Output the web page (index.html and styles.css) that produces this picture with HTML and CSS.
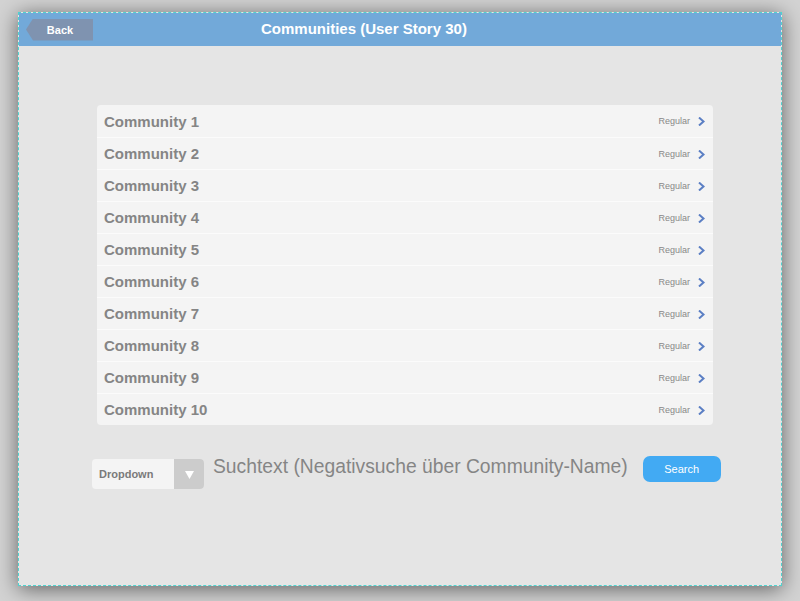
FILE: index.html
```html
<!DOCTYPE html>
<html>
<head>
<meta charset="utf-8">
<link rel="stylesheet" href="styles.css">
</head>
<body>
<div class="frame">
  <div class="header">
    <div class="back">Back</div>
    <div class="title">Communities (User Story 30)</div>
  </div>
  <div class="content">
    <ul class="list">
      <li class="row"><span class="name">Community 1</span><span class="tag">Regular</span><svg class="chev" viewBox="0 0 7 9" width="7" height="9"><path d="M1 0.5 L5.5 4.5 L1 8.5" fill="none" stroke="#5b7fc4" stroke-width="2"/></svg></li>
      <li class="row"><span class="name">Community 2</span><span class="tag">Regular</span><svg class="chev" viewBox="0 0 7 9" width="7" height="9"><path d="M1 0.5 L5.5 4.5 L1 8.5" fill="none" stroke="#5b7fc4" stroke-width="2"/></svg></li>
      <li class="row"><span class="name">Community 3</span><span class="tag">Regular</span><svg class="chev" viewBox="0 0 7 9" width="7" height="9"><path d="M1 0.5 L5.5 4.5 L1 8.5" fill="none" stroke="#5b7fc4" stroke-width="2"/></svg></li>
      <li class="row"><span class="name">Community 4</span><span class="tag">Regular</span><svg class="chev" viewBox="0 0 7 9" width="7" height="9"><path d="M1 0.5 L5.5 4.5 L1 8.5" fill="none" stroke="#5b7fc4" stroke-width="2"/></svg></li>
      <li class="row"><span class="name">Community 5</span><span class="tag">Regular</span><svg class="chev" viewBox="0 0 7 9" width="7" height="9"><path d="M1 0.5 L5.5 4.5 L1 8.5" fill="none" stroke="#5b7fc4" stroke-width="2"/></svg></li>
      <li class="row"><span class="name">Community 6</span><span class="tag">Regular</span><svg class="chev" viewBox="0 0 7 9" width="7" height="9"><path d="M1 0.5 L5.5 4.5 L1 8.5" fill="none" stroke="#5b7fc4" stroke-width="2"/></svg></li>
      <li class="row"><span class="name">Community 7</span><span class="tag">Regular</span><svg class="chev" viewBox="0 0 7 9" width="7" height="9"><path d="M1 0.5 L5.5 4.5 L1 8.5" fill="none" stroke="#5b7fc4" stroke-width="2"/></svg></li>
      <li class="row"><span class="name">Community 8</span><span class="tag">Regular</span><svg class="chev" viewBox="0 0 7 9" width="7" height="9"><path d="M1 0.5 L5.5 4.5 L1 8.5" fill="none" stroke="#5b7fc4" stroke-width="2"/></svg></li>
      <li class="row"><span class="name">Community 9</span><span class="tag">Regular</span><svg class="chev" viewBox="0 0 7 9" width="7" height="9"><path d="M1 0.5 L5.5 4.5 L1 8.5" fill="none" stroke="#5b7fc4" stroke-width="2"/></svg></li>
      <li class="row"><span class="name">Community 10</span><span class="tag">Regular</span><svg class="chev" viewBox="0 0 7 9" width="7" height="9"><path d="M1 0.5 L5.5 4.5 L1 8.5" fill="none" stroke="#5b7fc4" stroke-width="2"/></svg></li>
    </ul>
    <div class="searchbar">
      <div class="dropdown">
        <span class="dd-label">Dropdown</span>
        <span class="dd-arrow"><svg viewBox="0 0 9 8" width="9" height="8"><path d="M0 0 H9 L4.5 8 Z" fill="#ffffff"/></svg></span>
      </div>
      <div class="suchtext">Suchtext (Negativsuche über Community-Name)</div>
      <div class="search-btn">Search</div>
    </div>
  </div>
</div>
</body>
</html>
```
FILE: styles.css
```css
* { box-sizing: border-box; }
html, body {
  margin: 0;
  padding: 0;
  width: 800px;
  height: 601px;
  overflow: hidden;
  background: #d3d3d3;
  font-family: "Liberation Sans", Arial, sans-serif;
}
.frame {
  margin: 12px 0 0 18px;
  width: 764px;
  height: 574px;
  border: 1px dashed #4fd3cf;
  background: #e5e5e5;
  box-shadow: 0 3px 20px rgba(0, 0, 0, 0.55);
  display: flex;
  flex-direction: column;
}
.header {
  height: 33px;
  background: #72a9d9;
  display: flex;
  align-items: center;
  padding-left: 7px;
}
.back {
  width: 67px;
  height: 22px;
  background: #7f93b0;
  clip-path: polygon(0 50%, 7px 0, 100% 0, 100% 100%, 7px 100%);
  color: #ffffff;
  font-weight: bold;
  font-size: 11px;
  display: flex;
  align-items: center;
  justify-content: center;
  padding-left: 1px;
}
.title {
  margin-left: 168px;
  color: #ffffff;
  font-weight: bold;
  font-size: 15px;
  margin-top: -2px;
}
.content {
  padding: 59px 0 0 78px;
}
.list {
  list-style: none;
  margin: 0;
  padding: 0;
  width: 616px;
  background: #f4f4f4;
  border-radius: 4px;
  overflow: hidden;
}
.row {
  height: 32px;
  display: flex;
  align-items: center;
  padding: 0 8px 0 7px;
  border-top: 1px solid #fbfbfb;
}
.row:first-child { border-top: none; }
.name {
  flex: 1;
  font-size: 15px;
  font-weight: bold;
  color: #858585;
}
.tag {
  font-size: 9px;
  color: #888888;
  margin-right: 8px;
}
.chev { display: block; margin-top: 1px; }
.searchbar {
  margin: 31px 0 0 -5px;
  display: flex;
  align-items: flex-start;
}
.dropdown {
  margin-top: 3px;
  width: 112px;
  height: 30px;
  display: flex;
  border-radius: 4px;
  overflow: hidden;
  background: #f4f4f4;
}
.dd-label {
  flex: 1;
  font-size: 11px;
  font-weight: bold;
  color: #7a7a7a;
  padding-left: 7px;
  display: flex;
  align-items: center;
}
.dd-arrow {
  width: 30px;
  background: #cccccc;
  display: flex;
  align-items: center;
  justify-content: center;
}
.dd-arrow svg { display: block; margin-top: 1px; }
.suchtext {
  margin-left: 9px;
  margin-top: 0;
  font-size: 19.3px;
  color: #858585;
  white-space: nowrap;
}
.search-btn {
  margin-left: 15px;
  width: 78px;
  height: 26px;
  border-radius: 7px;
  background: #42aaf3;
  color: #ffffff;
  font-size: 11px;
  display: flex;
  align-items: center;
  justify-content: center;
}
```
